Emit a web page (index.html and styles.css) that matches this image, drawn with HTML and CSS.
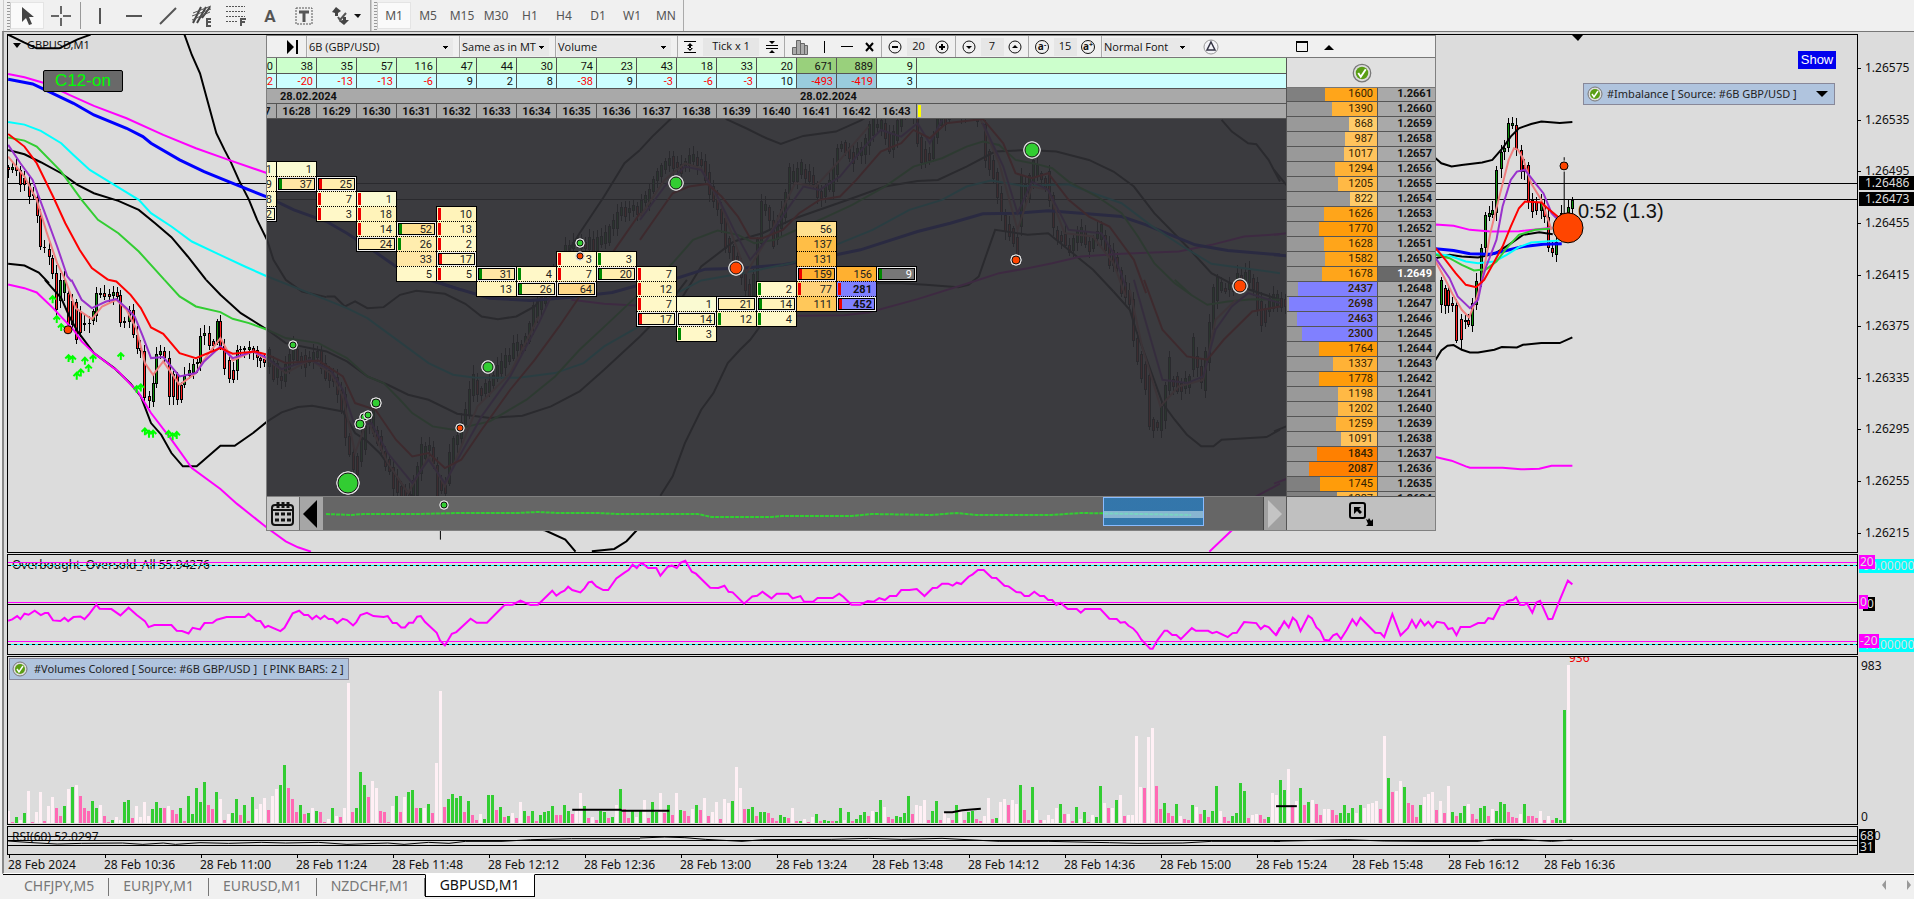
FILE: index.html
```html
<!DOCTYPE html>
<html lang="en">
<head>
<meta charset="utf-8">
<title>GBPUSD,M1</title>
<link rel="stylesheet" href="styles.css">
</head>
<body>
<div class="app">
  <header class="toolbar">
    <div class="tools">
      <span class="grip"></span>
      <button class="tool active" aria-label="Cursor"><svg width="20" height="20" viewBox="0 0 20 20"><path fill="#444" d="M5 1v15l4-4 3 7 3-1-3-7h5z"/></svg></button>
      <button class="tool" aria-label="Crosshair"><svg width="20" height="20" viewBox="0 0 20 20"><path stroke="#666" stroke-width="2" d="M0 10h8M12 10h8M10 0v8M10 12v8"/></svg></button>
      <span class="sep"></span>
      <button class="tool" aria-label="Vertical line"><svg width="20" height="20" viewBox="0 0 20 20"><path stroke="#555" stroke-width="2" d="M10 2v16"/></svg></button>
      <button class="tool" aria-label="Horizontal line"><svg width="20" height="20" viewBox="0 0 20 20"><path stroke="#555" stroke-width="2" d="M2 10h16"/></svg></button>
      <button class="tool" aria-label="Trendline"><svg width="20" height="20" viewBox="0 0 20 20"><path stroke="#555" stroke-width="2" d="M2 18L18 2"/></svg></button>
      <button class="tool" aria-label="Equidistant channel"><svg width="22" height="22" viewBox="0 0 22 22"><path fill="none" stroke="#444" stroke-width="2" d="M2 18L10 2M6 18L15 2M11 13L19 2"/><path stroke="#555" d="M1 11L20 4M1 15L19 7M2 8L20 1"/><path fill="none" stroke="#555" stroke-width="2" d="M20 14h-4v7h4M16 17h4"/></svg></button>
      <button class="tool" aria-label="Fibonacci"><svg width="22" height="22" viewBox="0 0 22 22"><path stroke="#555" stroke-width="1" stroke-dasharray="2 1" d="M1 1.500h19M1 6.500h19M1 11.500h19M1 16.500h12"/><path fill="none" stroke="#555" stroke-width="2" d="M16 21v-7h5M16 17h4"/></svg></button>
      <button class="tool" aria-label="Text"><b>A</b></button>
      <button class="tool" aria-label="Text label"><svg width="18" height="18" viewBox="0 0 18 18"><rect x="1" y="1" width="16" height="16" fill="none" stroke="#555" stroke-dasharray="2 1"/><path stroke="#555" stroke-width="3" d="M4 5h10M9 5v10"/></svg></button>
      <button class="tool wide" aria-label="Arrows"><svg width="30" height="20" viewBox="0 0 30 20"><path fill="#444" d="M1 6l4-5 5 4-3 2v3H4V7zM18 14l-5 5-5-4 4-1v-3h3v3z"/><path fill="none" stroke="#555" stroke-width="2" d="M7 11l2 3 6-7"/><path fill="#111" d="M23 8h7l-3 4z"/></svg></button>
    </div>
    <nav class="tools frames">
      <span class="grip"></span>
      <button class="tool active">M1</button><button class="tool">M5</button><button class="tool">M15</button><button class="tool">M30</button><button class="tool">H1</button><button class="tool">H4</button><button class="tool">D1</button><button class="tool">W1</button><button class="tool">MN</button>
    </nav>
  </header>

  <main class="workspace">
    <section class="pane price">
      <span class="caption symbol"><i class="down"></i>GBPUSD,M1</span>
      <svg class="plot" viewBox="0 0 1849 517" preserveAspectRatio="none">
        <path class="hair" d="M0 148.500H1849M0 164.500H1849"/>
        <g id="candles"></g>
        <g transform="translate(-8 -35) scale(.40816 .33333)">
          <polyline class="k" points="20,104 60,128 90,145 145,145 190,118 222,104"/>
          <polyline class="k" points="452,104 470,165 490,220 510,310 530,400 550,450 565,485 585,540 610,600 630,660 655,722 670,780 700,840 740,875 800,892"/>
          <polyline class="k" points="20,792 60,797 95,818 120,850"/>
          <polyline class="k" points="20,450 60,463 100,487 150,520 190,555 230,580 290,603 340,630 380,670 420,712 460,770 505,840"/>
          <polyline class="k" points="1340,870 1370,800 1420,700 1480,590 1530,490 1568,450"/>
          <polyline class="m" points="20,222 60,232 110,250 170,285 230,318 310,355 400,405 480,445 560,480 655,520 800,590"/>
          <polyline class="b" points="20,238 80,252 120,275 180,310 230,345 310,385 350,410 370,430 440,480 500,515 560,545 655,592 720,630 800,665 850,700 900,740 970,800 1050,840 1130,870"/>
          <polyline class="c" points="20,366 60,374 100,393 150,430 180,465 220,510 280,555 340,600 370,640 420,680 470,725 530,760 600,800 655,830"/>
          <polyline class="g" points="20,413 60,422 90,440 150,515 200,600 240,660 290,700 340,755 403,840"/>
          <polyline class="s" points="20,470 60,530 90,600 115,700 140,790 160,840"/>
          <polyline class="v" points="20,435 50,490 80,540 110,640 140,740 165,830 175,845"/>
          <polyline class="r" points="20,402 60,440 90,490 130,590 160,670 195,750 225,805 265,840"/>
          <polyline class="r" points="1420,890 1450,850 1500,760 1568,640"/>
        </g>
        <g transform="translate(632 -35) scale(.40816 .33333)">
          <polyline class="k" points="0,450 30,410 75,357 110,320"/>
          <polyline class="k" points="210,357 260,385 310,415 345,432 400,408 480,395 540,362 600,320"/>
          <polyline class="k" points="560,850 640,850 700,855 780,862 805,855 830,830 870,690 950,705 1000,700 1050,750 1110,810 1160,875"/>
          <polyline class="k" points="1425,360 1450,395 1490,430 1510,433 1540,480 1568,545"/>
          <polyline class="k" points="100,900 150,800 230,725 300,700 380,655 450,625 520,595 600,560 680,543 730,540 800,500 870,455 950,450 1020,455 1100,480 1160,515 1210,560 1260,640 1340,740 1400,820 1450,852 1568,900"/>
          <polyline class="m" points="385,948 500,946 560,938 680,898 800,852 880,820 950,805 1010,790 1080,770 1180,762 1320,755 1400,735 1480,710 1568,703"/>
          <polyline class="b" points="0,845 90,835 160,808 250,805 350,795 440,775 540,750 680,695 760,670 840,642 920,640 1000,633 1080,640 1180,650 1240,675 1300,705 1360,735 1440,752 1568,765"/>
          <polyline class="c" points="90,880 150,842 250,820 370,790 480,735 570,690 660,630 740,600 800,560 860,542 940,558 1050,553 1110,580 1180,610 1250,675 1330,740 1400,792 1480,805 1568,820"/>
          <polyline class="g" points="0,880 80,790 130,720 190,692 240,705 280,730 330,720 380,692 450,655 520,615 600,560 670,500 740,475 800,440 840,425 880,435 920,480 970,492 1010,505 1050,545 1120,590 1180,640 1220,710 1260,790 1310,850 1350,885"/>
          <polyline class="s" points="0,650 60,540 110,490 150,505 200,620 260,820 320,700 380,550 430,560 490,480 560,380"/>
          <polyline class="s" points="835,360 880,490 925,690 960,560 1000,570 1040,700 1110,710 1160,790 1190,890"/>
          <polyline class="v" points="0,660 60,560 110,500 150,510 190,590 230,690 270,780 310,720 360,630 400,560 440,570 490,530 550,440 590,390 640,410 680,370 710,430 740,360"/>
          <polyline class="v" points="840,370 890,500 925,640 960,545 1000,570 1050,690 1130,700 1160,760 1190,860"/>
          <polyline class="r" points="0,720 40,650 80,580 120,560 165,552 200,590 240,650 270,715 300,715 350,690 390,640 440,600 490,590 530,540 590,455 640,430 670,390 710,415 750,370 840,357 890,430 920,520 960,535 1000,520 1050,600 1100,650 1150,680 1210,780 1240,880"/>
        </g>
        <g transform="translate(1266 -35) scale(.40816 .33333)">
          <polyline class="k" points="0,510 30,555 200,600 300,560 396,475 410,490 435,500 460,495 510,488 535,480 560,445 580,410 600,385 630,372 655,365 700,369 731,366"/>
          <polyline class="k" points="396,775 430,765 460,770 500,773 540,762 575,735 610,705 650,697 683,703"/>
          <polyline class="m" points="0,705 30,700 396,674 440,678 480,690 530,695 600,694 680,684"/>
          <polyline class="b" points="0,765 30,768 396,747 440,752 480,762 530,763 570,752 610,740 660,733 705,732"/>
          <polyline class="c" points="396,762 430,768 470,785 500,790 540,785 570,765 600,742 630,728 700,722"/>
          <polyline class="g" points="396,765 430,775 460,795 490,812 520,808 545,785 570,745 600,705 640,690 680,686"/>
          <polyline class="s" points="396,785 420,840 437,882 460,930 478,953 495,900 510,840 530,700 550,600 575,480 588,445 598,450 610,475 630,550 655,600 680,690"/>
          <polyline class="v" points="396,775 430,835 450,890 480,925 500,900 510,840 520,800 545,720 560,620 580,540 595,515 615,510 640,550 660,580 680,640 700,665"/>
          <polyline class="r" points="396,745 420,780 445,820 470,855 495,862 515,840 540,785 560,740 580,680 600,625 615,605 655,608 675,630 700,655"/>
          <path class="w" d="M711 472v10M711 515v135"/>
        </g>
        <g transform="translate(-8 245) scale(.40816 .33333)">
          <polyline class="k" points="800,50 820,50 845,80 870,65 900,85 940,82 980,45 1020,33 1090,42 1140,72 1180,110 1220,118 1265,110 1310,80 1340,30"/>
          <polyline class="k" points="110,0 150,55 170,110 190,155 230,220 280,265 320,312 345,350 370,430 395,465 420,520 448,560 482,560 540,498 575,498 620,460 655,425 690,398 730,382 765,378 840,395 870,460 900,485 930,520 960,570 1000,640 1100,720 1335,752 1385,780 1410,816"/>
          <polyline class="k" points="1450,815 1505,808 1535,785 1560,752"/>
          <polyline class="k" points="505,0 540,45 590,100 655,150 700,190 800,215 850,245 900,290 950,315 1000,345 1050,360 1120,402 1200,415 1280,408 1350,380 1420,335 1480,270 1568,170"/>
          <polyline class="m" points="20,14 60,25 90,38 130,85 180,150 200,185 230,220 290,275 340,340 370,400 420,480 470,565 540,628 580,672 655,745 700,785 730,803 762,816"/>
          <polyline class="m" points="1400,60 1480,72 1568,78"/>
          <polyline class="b" points="1080,10 1130,30 1200,55 1300,62 1400,52 1500,38 1568,15"/>
          <polyline class="c" points="655,-10 800,60 850,85 900,115 950,160 1000,205 1050,250 1110,285 1160,293 1270,294 1360,280 1430,250 1480,200 1568,138"/>
          <polyline class="g" points="403,0 440,50 480,80 540,97 570,117 610,130 655,150 700,175 780,190 850,235 900,290 940,310 980,360 1010,400 1060,440 1110,450 1200,425 1290,360 1360,290 1420,210 1490,130 1568,40"/>
          <polyline class="s" points="160,0 185,85 225,118 250,80 285,60 310,90 335,150 355,250 375,285 400,245 440,315 480,280 500,240 540,175 570,242 620,215 655,240 700,280 760,240 810,280 840,350 870,520 900,420 950,550 1000,640 1050,530 1090,620 1130,500 1170,380 1250,280 1320,110"/>
          <polyline class="v" points="175,0 200,60 225,85 260,65 285,58 310,85 330,110 350,170 370,235 400,232 440,290 480,280 500,245 540,200 570,235 620,215 655,235 690,268 760,240 810,270 840,330 870,440 910,430 950,520 1010,610 1050,540 1090,610 1130,520 1180,410 1250,290 1320,130 1350,50"/>
          <polyline class="r" points="265,0 285,5 320,45 345,85 370,143 400,162 440,220 480,235 500,225 540,205 570,222 625,215 655,225 700,250 780,242 840,290 870,370 920,390 970,480 1010,530 1050,520 1090,565 1130,540 1180,450 1250,330 1310,240 1370,140 1420,50"/>
          <path class="w" d="M1079 700v80"/>
          <g id="arrows"></g>
        </g>
        <g transform="translate(632 245) scale(.40816 .33333)">
          <polyline class="k" points="50,648 80,590 110,490 150,390 180,340 215,250 245,210 270,180 300,130"/>
          <polyline class="k" points="0,170 40,120 115,0"/>
          <polyline class="k" points="1160,35 1200,90 1215,150 1280,370 1310,420 1340,465 1375,500 1405,500 1425,480 1535,472 1568,450"/>
          <polyline class="m" points="1395,816 1450,752 1510,650 1568,612"/>
          <polyline class="g" points="1310,0 1350,45 1390,75 1440,65 1500,58 1568,60"/>
          <polyline class="s" points="1200,30 1230,200 1275,380 1320,320 1380,300 1410,120 1460,60"/>
          <polyline class="v" points="1210,0 1240,130 1280,300 1340,310 1380,290 1410,150 1450,80 1490,40 1568,70"/>
          <polyline class="r" points="1235,0 1280,150 1340,230 1390,240 1430,180 1500,95 1568,80"/>
        </g>
        <g transform="translate(1266 245) scale(.40816 .33333)">
          <polyline class="k" points="0,455 30,440 200,380 396,240 410,212 425,198 440,196 460,210 480,218 500,218 540,210 558,202 595,203 610,195 655,190 700,190 731,173"/>
          <polyline class="m" points="0,612 30,598 396,532 435,543 470,560 480,564 560,564 605,569 650,567 680,558 731,558"/>
        </g>
        <g class="dot"><circle cx="60" cy="295" r="4"/><circle cx="1556" cy="131" r="4"/><circle cx="1560" cy="193" r="15"/></g>
        <path d="M1564 0h11l-5 6z"/>
      </svg>
      <button class="c12">C12-on</button>
      <span class="timer">0:52 (1.3)</span>
      <button class="show">Show</button>
      <button class="indicator imbalance"><svg width="16" height="16" viewBox="0 0 16 16"><use href="#tick"/></svg>#Imbalance [ Source: #6B GBP/USD ]<i class="down"></i></button>

      <div class="panel">
        <div class="ptools">
          <div class="grp first"><button aria-label="Go to end"><svg width="14" height="14" viewBox="0 0 14 14"><path d="M1 0l7 7-7 7zM10 0h2v14h-2z"/></svg></button></div>
          <div class="grp g2"><select aria-label="Instrument"><option>6B (GBP/USD)</option></select></div>
          <div class="grp g3"><select aria-label="Timeframe"><option>Same as in MT</option></select></div>
          <div class="grp g4"><select aria-label="Data"><option>Volume</option></select></div>
          <div class="grp g5">
            <button aria-label="Expand rows"><svg width="12" height="14" viewBox="0 0 12 14"><path stroke="#000" d="M0 1.500h12M0 12.500h12"/><path d="M3 6l3-3 3 3zM3 8l3 3 3-3zM5 5h2v4H5z"/></svg></button>
            <span class="field tick">Tick x 1</span>
            <button aria-label="Collapse rows"><svg width="12" height="14" viewBox="0 0 12 14"><path stroke="#000" d="M0 5.500h12M0 8.500h12"/><path d="M3 1l3 3 3-3zM3 13l3-3 3 3z"/></svg></button>
          </div>
          <div class="grp g6">
            <button aria-label="Histogram"><svg width="18" height="16" viewBox="0 0 18 16"><path fill="#aaa" stroke="#666" d="M1.500 8.500h4v7h-4zM5.500 1.500h4v14h-4zM9.500 4.500h4v11h-4zM13.500 6.500h3v9h-3z"/></svg></button>
            <button aria-label="Vertical line"><svg width="8" height="14" viewBox="0 0 8 14"><path d="M3 1h1v12H3z"/></svg></button>
            <button aria-label="Horizontal line"><svg width="12" height="14" viewBox="0 0 12 14"><path d="M0 6h12v1H0z"/></svg></button>
            <button aria-label="Delete"><svg width="10" height="12" viewBox="0 0 10 12"><path stroke="#000" stroke-width="2" d="M1 2l7 8M8 2l-7 8"/></svg></button>
          </div>
          <div class="grp g7"><button aria-label="Narrower"><svg width="14" height="14" viewBox="0 0 14 14"><circle class="ring" cx="7" cy="7" r="6"/><path d="M4 6h6v2H4z"/></svg></button><span class="field">20</span><button aria-label="Wider"><svg width="14" height="14" viewBox="0 0 14 14"><circle class="ring" cx="7" cy="7" r="6"/><path d="M4 6h6v2H4zM6 4h2v6H6z"/></svg></button></div>
          <div class="grp g8"><button aria-label="Lower"><svg width="14" height="14" viewBox="0 0 14 14"><circle class="ring" cx="7" cy="7" r="6"/><path d="M4 6h6l-3 3z"/></svg></button><span class="field">7</span><button aria-label="Higher"><svg width="14" height="14" viewBox="0 0 14 14"><circle class="ring" cx="7" cy="7" r="6"/><path d="M4 8h6l-3-3z"/></svg></button></div>
          <div class="grp g8"><button class="fs" aria-label="Smaller font">a<sup>-</sup></button><span class="field">15</span><button class="fs" aria-label="Larger font">a<sup>+</sup></button></div>
          <div class="grp g10"><select aria-label="Font"><option>Normal Font</option></select></div>
          <button class="delta" aria-label="Delta"><svg width="16" height="16" viewBox="0 0 16 16"><circle cx="8" cy="8" r="7" fill="#f4f4f8" stroke="#999"/><path fill="none" stroke="#334" stroke-width="1.500" d="M8 3l4 8H4z"/></svg></button>
          <div class="win"><button aria-label="Maximize"><svg width="12" height="12" viewBox="0 0 12 12"><path fill="none" stroke="#000" d="M.5 1.500h11v9H.5z"/><path d="M0 0h12v2H0z"/></svg></button><button aria-label="Collapse"><svg width="10" height="6" viewBox="0 0 10 6"><path d="M0 6l5-5 5 5z"/></svg></button></div>
        </div>
        <div class="pbody">
          <div class="map">
            <table class="totals"><tbody id="totals"></tbody></table>
            <div class="cluster" id="cluster"></div>
            <div class="scrub">
              <button class="cal" aria-label="Calendar"><svg width="26" height="26" viewBox="0 0 26 26"><rect x="2" y="4" width="21" height="20" rx="3" fill="none" stroke="#111" stroke-width="2"/><path stroke="#111" stroke-width="2" d="M2 9h21"/><path stroke="#111" stroke-width="3" d="M8 1v6M13 1v6M18 1v6"/><path stroke="#111" stroke-width="3" stroke-dasharray="4 2" d="M5 13h17M5 19h17"/></svg></button>
              <button class="prev" aria-label="Back"><svg width="14" height="28" viewBox="0 0 14 28"><path d="M14 0v28L0 14z"/></svg></button>
              <div class="track">
                <svg viewBox="0 0 941 32" preserveAspectRatio="none"><path class="trail" d="M3 17l25 1 12-1h55l40-1h60l20-1 20 1h40l20 1h80l14 3h60l10-1h70l20-2 60 1 25-2 20 2h75l30-2 60 1 50 1"/></svg>
                <button class="window" aria-label="Visible range"></button>
              </div>
              <button class="next" aria-label="Forward"><svg width="14" height="28" viewBox="0 0 14 28"><path fill="#c4c4c4" d="M0 0v28l14-14z"/></svg></button>
            </div>
          </div>
          <div class="dom">
            <div class="dhead"><svg width="20" height="20" viewBox="0 0 16 16"><use href="#tick"/></svg></div>
            <div class="dlist"><table><tbody id="ladder"></tbody></table></div>
            <div class="dfoot"><button aria-label="Resize"><svg width="24" height="24" viewBox="0 0 24 24"><rect x="1" y="1" width="15" height="15" rx="2" fill="none" stroke="#000" stroke-width="2"/><path d="M5 5h7l-2 2 3 3-2 2-3-3-3 3zM17 17l2 1 1-2 2 3 2-2v7h-7l2-2z"/></svg></button></div>
          </div>
        </div>
        <svg class="signals" width="1170" height="496" viewBox="266 35 1170 496">
          <g class="up"><circle cx="293" cy="345" r="3"/><circle cx="488" cy="367" r="5"/><circle cx="376" cy="403" r="4"/><circle cx="364" cy="417" r="3"/><circle cx="360" cy="424" r="4"/><circle cx="368" cy="415" r="3"/><circle cx="348" cy="483" r="10"/><circle cx="444" cy="505" r="3"/><circle cx="580" cy="243" r="3"/><circle cx="676" cy="183" r="6"/><circle cx="1032" cy="150" r="7"/></g>
          <g class="dn"><circle cx="460" cy="428" r="3"/><circle cx="580" cy="256" r="3"/><circle cx="736" cy="268" r="6"/><circle cx="1016" cy="260" r="4"/><circle cx="1240" cy="286" r="6"/></g>
        </svg>
      </div>
    </section>
    <aside class="axis prices">
      <span>1.26575</span><span>1.26535</span><span>1.26495</span><span>1.26455</span><span>1.26415</span><span>1.26375</span><span>1.26335</span><span>1.26295</span><span>1.26255</span><span>1.26215</span>
      <b class="tag ask">1.26486</b><b class="tag bid">1.26473</b>
    </aside>

    <section class="pane">
      <span class="caption">Overbought_Oversold_All 55.94276</span>
      <svg class="plot" viewBox="0 0 1849 99" preserveAspectRatio="none">
        <path class="cy" d="M0 10.500H1849M0 89.500H1849"/><path class="dash" d="M0 10.500H1849M0 89.500H1849"/>
        <path class="hair" d="M0 49.500H1849"/><path class="mg" d="M0 7.500H1849M0 47.500H1849M0 86.500H1849"/>
        <g transform="translate(-8 -15) scale(.40816 .33333)"><polyline class="m" points="20,242 30,238 42,228 50,237 60,221 70,224 85,212 100,225 110,219 118,219 130,241 148,243 158,233 167,243 180,231 197,229 207,237 217,224 236,194 244,206 273,207 295,226 315,203 335,225 355,243 364,261 378,255 420,255 433,272 446,273 462,280 472,263 490,268 501,249 521,248 531,239 555,231 600,231 609,221 628,242 638,243 649,262 657,257 687,273 697,263 717,220 733,212 745,225 755,225 765,237 775,227 785,237 795,227 805,237 815,237 826,249 840,236 850,240 865,256 873,246 883,225 899,218 915,228 940,231 950,228 962,249 972,249 983,262 992,262 1002,248 1012,248 1022,230 1031,228 1041,245 1070,278 1078,301 1090,316 1107,281 1118,276 1153,236 1168,248 1193,248 1236,195 1256,194 1275,182 1290,190 1300,195 1318,194 1353,152 1363,167 1373,158 1383,152 1392,140 1402,150 1422,157 1432,145 1442,127 1450,125 1461,139 1478,150 1490,150 1510,115 1530,98 1540,90 1550,74 1560,84 1568,72"/></g>
        <g transform="translate(632 -15) scale(.40816 .33333)"><polyline class="m" points="0,70 8,72 20,84 40,84 50,107 68,80 78,77 90,84 100,68 111,62 127,95 137,101 172,143 192,144 207,137 217,155 227,157 255,191 275,169 287,167 300,155 322,175 335,161 363,161 374,175 393,168 402,185 424,185 435,174 472,174 488,161 498,170 518,194 540,194 558,183 572,185 586,174 600,180 612,168 628,168 640,150 660,150 678,147 697,168 717,144 728,143 740,131 755,131 766,137 776,128 787,132 805,110 815,103 828,90 842,90 862,113 873,114 893,137 903,139 922,156 933,157 942,168 953,168 966,155 980,168 990,168 1000,180 1010,180 1020,195 1030,188 1048,207 1070,207 1080,218 1090,207 1128,207 1150,236 1168,237 1177,248 1188,246 1197,257 1208,265 1218,278 1228,298 1250,326 1256,326 1268,300 1285,272 1292,272 1304,285 1314,285 1325,297 1352,264 1362,272 1392,272 1402,279 1413,275 1440,291 1452,279 1462,278 1480,246 1510,249 1521,267 1530,257 1540,261 1558,285 1568,262"/></g>
        <g transform="translate(1266 -15) scale(.40816 .33333)"><polyline class="m" points="5,286 25,244 36,262 46,233 55,243 65,273 84,227 93,235 104,262 113,272 123,299 135,301 145,286 154,281 164,297 178,270 192,238 202,255 212,233 248,278 261,279 270,291 290,222 310,286 328,264 338,240 348,262 359,239 369,256 378,245 389,262 399,245 417,249 427,267 437,264 447,285 457,261 480,261 500,249 516,249 525,234 537,237 555,195 563,194 575,182 586,179 593,171 603,195 612,195 620,190 633,218 643,187 652,182 672,237 682,236 700,180 720,122 731,133"/></g>
      </svg>
    </section>
    <aside class="axis osc"><b class="tag cyan t1">90.00000</b><b class="tag pink t2">20</b><b class="tag t3">&nbsp;0</b><b class="tag pink t4">0</b><b class="tag cyan t5">10.00000</b><b class="tag pink t6">-20</b></aside>

    <section class="pane">
      <button class="indicator volumes"><svg width="16" height="16" viewBox="0 0 16 16"><g id="tick"><circle cx="8" cy="8" r="7" fill="#ddd" stroke="#777"/><circle cx="8" cy="8" r="5" fill="#5a9e14"/><path fill="none" stroke="#fff" stroke-width="1.500" d="M5 8l2 3 4-6"/></g></svg><span>#Volumes Colored [ Source: #6B GBP/USD ]</span><span>[ PINK BARS: 2 ]</span></button>
      <svg class="plot" viewBox="0 0 1849 167" preserveAspectRatio="none">
        <g id="bars"></g>
        <g transform="translate(-8 -117) scale(.40816 .33333)"><polyline class="k" points="1402,809 1520,809 1525,812 1640,812"/></g>
        <g transform="translate(632 -117) scale(.40816 .33333)"><polyline class="k" points="745,816 765,816 790,810 812,808 835,806"/></g>
        <g transform="translate(1266 -117) scale(.40816 .33333)"><path class="k" d="M5 798H56"/></g>
      </svg>
      <span class="peak">936</span>
    </section>
    <aside class="axis vol"><span>983</span><span>0</span></aside>

    <section class="pane">
      <span class="caption">RSI(60) 52.0297</span>
      <svg class="plot" viewBox="0 0 1849 27" preserveAspectRatio="none">
        <path class="hair" d="M0 9.500H1849M0 13.500H1849M0 18.500H1849"/>
        <g transform="translate(-8 -287) scale(.40816 .33333)"><polyline class="w" points="20,903 80,908 140,912 200,910 300,909 350,913 400,909 430,913 490,908 560,910 640,907 700,909 780,907 850,913 950,909 990,913 1050,907 1100,910 1140,904 1230,904 1300,899 1400,896 1568,896"/></g>
        <g transform="translate(632 -287) scale(.40816 .33333)"><polyline class="w" points="0,894 60,891 110,893 160,898 250,904 300,899 470,898 560,895 640,898 740,895 880,904 1000,904 1150,908 1220,910 1330,909 1400,904 1568,904"/></g>
        <g transform="translate(1266 -287) scale(.40816 .33333)"><polyline class="w" points="0,904 180,899 270,903 370,904 500,904 540,898 600,898 680,904 731,900"/></g>
      </svg>
    </section>
    <aside class="axis rsi"><span>100</span><b class="tag t7">68</b><b class="tag t8">31</b></aside>
  </main>

  <div class="times">
    <time>28 Feb 2024</time><time>28 Feb 10:36</time><time>28 Feb 11:00</time><time>28 Feb 11:24</time><time>28 Feb 11:48</time><time>28 Feb 12:12</time><time>28 Feb 12:36</time><time>28 Feb 13:00</time><time>28 Feb 13:24</time><time>28 Feb 13:48</time><time>28 Feb 14:12</time><time>28 Feb 14:36</time><time>28 Feb 15:00</time><time>28 Feb 15:24</time><time>28 Feb 15:48</time><time>28 Feb 16:12</time><time>28 Feb 16:36</time>
  </div>
  <footer class="tabs">
    <button>CHFJPY,M5</button><button>EURJPY,M1</button><button>EURUSD,M1</button><button>NZDCHF,M1</button><button class="on">GBPUSD,M1</button>
    <span class="scroll"><svg width="30" height="10" viewBox="0 0 30 10"><path fill="#999" d="M4 0v10L0 5zM25 0v10l4-5z"/></svg></span>
  </footer>
</div>
<script src="app.js"></script>
</body>
</html>
```

FILE: styles.css
```css
* { box-sizing: border-box; }
body { margin: 0; background: #f0f0f0; color: #111; font: 12px/16px "Noto Sans", sans-serif; }
button { margin: 0; padding: 0; border: 0; background: none; color: inherit; font: inherit; }
svg { display: block; }
table { border-collapse: separate; border-spacing: 0; table-layout: fixed; }
td { padding: 0; }

.app { display: flex; flex-direction: column; min-height: 100vh; }

.toolbar { display: flex; height: 31px; padding-left: 3px; }
.tools { display: flex; align-items: center; padding-left: 3px; border-right: 1px solid #aaa; border-left: 1px solid #ccc; }
.frames { padding-left: 2px; }
.frames .tool { font-size: 12px; color: #555; }
.grip { width: 3px; height: 28px; background: repeating-linear-gradient(#999 0 1px, #f0f0f0 1px 3px); }
.tool { display: flex; align-items: center; justify-content: center; width: 34px; height: 27px; color: #555; }
.tool.active { background: #fafafa; border: 1px solid #e4e4e4; border-left-color: #ccc; }
.tool b { font: bold 17px/20px Roboto, sans-serif; }
.tool.wide { width: 49px; }
.sep { width: 1px; height: 27px; margin: 0 2px; background: #999; }

.workspace {
  flex: 1; display: grid; grid-template-columns: minmax(0, 1fr) 56px;
  grid-template-rows: minmax(0, 518fr) minmax(0, 101fr) minmax(0, 169fr) minmax(0, 29fr);
  row-gap: 1px; margin-left: 2px; padding: 2px 0 0 3px; background: #dcdcdc;
  border-top: 1px solid #777; border-left: 2px solid #888;
}
.pane { position: relative; border: 1px solid #000; overflow: hidden; }
.plot { position: absolute; inset: 0; width: 100%; height: 100%; }
.caption { position: absolute; left: 4px; top: 2px; white-space: nowrap; }
.symbol { left: 5px; display: flex; align-items: center; gap: 6px; font-size: 11px; }
.down { border: 4px solid transparent; border-top: 5px solid #000; border-bottom: 0; }

.plot polyline, .plot path { vector-effect: non-scaling-stroke; }
.plot polyline { fill: none; stroke-width: 2; }
.k { stroke: #000; stroke-width: 2; fill: none; }
.m { stroke: #f0f; }
.b { stroke: #00f; }
.plot .b { stroke-width: 3; }
.c { stroke: #0ff; }
.g { stroke: #32cd32; }
.r { stroke: #f00; }
.v { stroke: #9932cc; }
.s { stroke: #f08080; }
.w { stroke: #000; fill: none; }
.plot .w { stroke-width: 1; }
.hair { stroke: #000; }
.mg { stroke: #f0f; }
.cy { stroke: #0ff; }
.dash { stroke: #000; stroke-dasharray: 3 3; }
.hair, .mg, .cy, .dash, #candles rect, #bars rect { shape-rendering: crispEdges; }
.dot circle { fill: #ff4500; stroke: #000; }
.plot .arrow { stroke: #0f0; fill: none; }

.c12 { position: absolute; left: 35px; top: 35px; width: 80px; height: 22px; border: 1px solid #000; border-radius: 2px; background: #696969; color: #0f0; font: 17px/20px "Liberation Sans", sans-serif; }
.timer { position: absolute; left: 1570px; top: 164px; font: 20px/24px "Liberation Sans", sans-serif; }
.show { position: absolute; right: 21px; top: 16px; width: 38px; height: 18px; background: #0000ee; color: #fff; font: 13px/18px "Liberation Sans", sans-serif; }
.indicator { position: absolute; display: flex; align-items: center; gap: 4px; height: 22px; padding: 0 3px; background: #b0c4de; border: 1px solid #889; font-size: 11px; color: #222; white-space: nowrap; }
.imbalance { right: 22px; top: 48px; width: 252px; }
.imbalance .down { margin-left: auto; margin-right: 3px; border-width: 6px; border-top-width: 6px; border-bottom: 0; }
.volumes { left: 1px; top: 1px; z-index: 1; gap: 6px; padding: 0 4px 0 2px; }
.peak { position: absolute; left: 1561px; top: -7px; color: #e00; }

.panel { position: absolute; left: 258px; right: 421px; top: 0; height: 496px; display: flex; flex-direction: column; border: 1px solid #808080; }
.ptools { display: flex; height: 22px; background: #f0f0f0; border-bottom: 1px solid #777; font: 11px/16px "Open Sans", sans-serif; }
.grp { display: flex; align-items: center; justify-content: space-between; padding: 0 6px; border-left: 1px solid #aaa; }
.grp.first { width: 39px; border: 0; justify-content: flex-end; }
.g2 { width: 153px; } .g3 { width: 96px; } .g4 { width: 122px; }
.g5 { width: 107px; } .g6 { width: 97px; } .g7 { width: 74px; } .g8 { width: 73px; } .g10 { width: 95px; }
.grp:has(select) { padding: 0 6px 0 1px; }
select {
  appearance: none; width: 100%; height: 18px; padding: 0 12px 0 1px; border: 0; font: inherit; color: inherit;
  background: linear-gradient(#000, #000) right 5px top 8px / 5px 1px no-repeat, linear-gradient(#000, #000) right 6px top 9px / 3px 1px no-repeat, linear-gradient(#000, #000) right 7px top 10px / 1px 1px no-repeat, #e8e8e8;
}
.field { width: 23px; height: 18px; background: #e6e6e6; text-align: center; }
.tick { width: 56px; }
.ring { fill: none; stroke: #111; }
.fs { width: 14px; height: 14px; border: 1px solid #111; border-radius: 50%; font: bold 10px/11px "Open Sans", sans-serif; }
.fs sup { font-size: 7px; line-height: 0; vertical-align: 3px; }
.delta { width: 30px; display: flex; align-items: center; justify-content: center; }
.win { display: flex; align-items: center; gap: 16px; width: 149px; margin-left: auto; padding-left: 10px; }

.pbody { flex: 1; min-height: 0; display: flex; }
.map { flex: 1; min-width: 0; display: flex; flex-direction: column; overflow: hidden; font: 11px/13px Roboto, sans-serif; }
.totals { width: calc(100% + 30px); margin-left: -30px; }
.totals td { width: 40px; height: 15px; padding: 1px 3px 0 0; border-right: 1px solid #555; border-bottom: 1px solid #555; text-align: right; white-space: nowrap; }
.totals td:last-child { width: auto; border-right: 0; }
.totals .sum td { background: #ccffcc; height: 16px; }
.totals .diff td { background: #ccffff; }
.totals .sum .hot { background: #99d07c; }
.totals .diff .hot { background: #99ccdd; }
.totals .neg { color: #f00; }
.totals .day td, .totals .hour td { background: #a9a9a9; font-weight: 700; }
.totals .day td { border-right: 0; padding-left: 3px; text-align: left; overflow: visible; }
.totals .hour td { padding-right: 0; text-align: center; }
.totals .hour td:last-child { background: linear-gradient(#ff0, #ff0) 1px 1px / 3px 12px no-repeat #a9a9a9; }
.cluster {
  flex: 1; min-height: 0; display: grid; grid-template-columns: repeat(17, 40px); grid-auto-rows: 15px;
  padding: 42px 0 0; background: rgba(45, 45, 50, .925); overflow: hidden;
}
.stack { border: 1px solid #000; margin: 0 -1px -1px 0; position: relative; left: -31px; }
.lot { position: relative; height: 15px; padding-right: 4px; border-top: 1px dotted #000; text-align: right; line-height: 15px; color: #222; }
.lot:first-child { height: 14px; border-top: 0; }
.lot.box { box-shadow: inset 0 0 0 1px #eee, inset 0 0 0 2px #000; }
.lot.up::before, .lot.dn::before { content: ""; position: absolute; left: 1px; top: 1px; bottom: 1px; width: 3px; background: #080; }
.lot.dn::before { background: #e00; }
.lot.box::before { left: 2px; top: 2px; bottom: 2px; }
.lot.big { font-weight: 700; color: #111; }

.scrub { display: flex; height: 34px; background: #666; border-top: 1px solid #808080; }
.scrub button { display: flex; align-items: center; justify-content: center; }
.scrub .cal { width: 33px; background: #c8c8c8; border-right: 1px solid #666; }
.scrub .prev { width: 23px; background: #a6a6a6; }
.scrub .prev svg { margin-right: 3px; }
.scrub .next { width: 23px; background: #a0a0a0; border-left: 1px solid #444; }
.track { flex: 1; position: relative; }
.track svg { width: 100%; height: 32px; }
.trail { fill: none; stroke: #32cd32; stroke-width: 2; stroke-dasharray: 4 1; }
.track .window { position: absolute; left: 83%; top: 0; width: 101px; height: 29px; border: 1px solid #8abcff; background: linear-gradient(rgba(30, 125, 200, .7) 13px, rgba(150, 215, 255, .7) 13px 20px, rgba(30, 125, 200, .7) 20px); }

.dom { width: 149px; display: flex; flex-direction: column; border-left: 1px solid #555; background: #c0c0c0; font: 11px/14px Roboto, sans-serif; }
.dhead { height: 30px; display: flex; align-items: center; justify-content: center; padding-left: 2px; background: #e0e0e0; border-bottom: 1px solid #777; }
.dlist { flex: 1; min-height: 0; overflow: hidden; display: flex; flex-direction: column; }
.dlist table { width: 100%; margin-top: -1px; }
.dlist td { height: 15px; border-bottom: 1px solid #555; text-align: right; padding-right: 4px; }
.dlist .qty { width: 91px; background: #999; border-right: 1px solid #555; color: #332200; }
.dlist .lvl { background: #a9a9a9; font-weight: 700; padding-right: 3px; }
.dlist .dark { background: #808080; }
.dlist .now { background: #696969; color: #fff; }
.dlist .qty.strong { font-weight: 500; }
.dfoot { height: 34px; display: flex; align-items: center; justify-content: center; border-top: 1px solid #555; background: #c0c0c0; }
.signals { position: absolute; left: -1px; top: -1px; pointer-events: none; }
.signals circle { stroke: #111; filter: drop-shadow(1px 0 0 #ddd) drop-shadow(-1px 0 0 #ddd) drop-shadow(0 1px 0 #ddd) drop-shadow(0 -1px 0 #ddd); }
.up { fill: #32cd32; }
.dn { fill: #ff4500; }

.axis { position: relative; overflow: hidden; }
.prices { display: flex; flex-direction: column; justify-content: space-between; padding: 26px 0 12px; }
.prices span { padding-left: 7px; position: relative; }
.prices span::before { content: ""; position: absolute; left: 0; top: 8px; width: 3px; height: 1px; background: #000; }
.tag { position: absolute; left: 1px; height: 14px; padding: 0 1px; background: #000; color: #ddd; font: 12px/14px "Noto Sans", sans-serif; }
.ask, .bid { width: 55px; padding-left: 6px; }
.ask { top: 142px; } .bid { top: 158px; }
.cyan { background: #0ff; width: 60px; padding-left: 4px; }
.pink { background: #f0f; }
.t1 { top: 5px; } .t2 { top: 1px; } .t3 { top: 43px; left: 5px; } .t4 { top: 41px; } .t5 { top: 84px; } .t6 { top: 80px; }
.t7 { top: 3px; } .t8 { top: 15px; height: 12px; line-height: 11px; }
.vol { display: flex; flex-direction: column; justify-content: space-between; padding: 2px 0 0 3px; }
.rsi { padding: 2px 0 0 2px; }

.times { display: grid; grid-auto-flow: column; grid-auto-columns: 96px; justify-content: start; height: 19px; margin-left: 2px; padding-left: 5px; background: #dcdcdc; border-left: 2px solid #888; border-bottom: 1px solid #fff; }
.times time { position: relative; line-height: 19px; margin-left: -1px; white-space: nowrap; }
.times time::before { content: ""; position: absolute; left: 1px; top: 0; width: 1px; height: 3px; background: #000; }

.tabs { display: flex; height: 25px; margin-left: 3px; padding-left: 7px; border-top: 1px solid #000; font-size: 14px; line-height: 20px; color: #777; }
.tabs button { position: relative; height: 23px; padding: 0 15px 2px 14px; }
.tabs button:not(.on)::after { content: ""; position: absolute; right: 0; top: 3px; width: 1px; height: 18px; background: #777; }
.tabs .on { margin: -1px 0 0; background: #fff; color: #111; border: 1px solid #000; border-top-color: #fff; }
.scroll { margin-left: auto; padding: 5px 2px 0 0; }
```

FILE: app.js
```js
const SVG = 'http://www.w3.org/2000/svg';
const byId = id => document.getElementById(id);

function rect(parent, x, y, w, h, fill) {
  const el = document.createElementNS(SVG, 'rect');
  Object.entries({ x, y, width: w, height: h, fill }).forEach(([k, v]) => el.setAttribute(k, v));
  parent.appendChild(el);
}

/* Volume bars: colour letter followed by height, one entry per minute. */
const volume = [
  'w12p1g6w3g10w32p1w11w31p2w17w26p15p7g17w34g36w38p27p15p12g22g15w18p7p1g3w6w3g21g23p5w17w6w21w7g14g21g15p15w17p13p9g15p2g27g9g35g21g41p18p14g31w24p3w9g10g24p8g18p2g26w14w19w25p13w27w34g38g58p35p24p11g18p9g10w15g12p11p1w4g15w7p6w15w140p11g15g51g38p26w42w35p12p11p1w17g27p11w26g31g33p15g15w15g19p10w60w132p16g24g29g25g27p11g22p8p3w9g4g28g28p13g16p6g7w10p5w21g12p7g12p2g8g11g12g17p8p8g18g12p9w12w30g17p5w6p3g12g11p5g6w18g34p14p5g12w6',
  'g13w23p5g21g11w30p10g18p8w30g13p12p7w14g18p13w25p7w11w21p4w24w20g22w56w35p14g14g16p7g11g11p10p5p2g8g6p5w15p2g2w4p1w6g9p2g3g2p2g2g15w3g11p2g4g8g11p7w12g11g23w16p6p4g7g6g10g27p9w18w17w23p3g12g22p3w10w5p3g18w12p3g11g12p4p2w7w25p4g5w21w24p18w23w19g38p13p3g36w13p3w3w8w4w15g19p9w9p2g16w4g11p1w8g6g37w20p15w15g23w28p7w8w8w87w36p35w86w95p37p14g20p10p7g19w7p4p3g18w16p9g13p6g12g37w12p6p2g7g10g40g32p5w8w9p8p4g6w30w28',
  'g43g33w54p18w22g35p18g21w23p19p8w14w14p13p8g10g18g10g15w10g18w15w19w20w22p14w87g45p31w32w42g36p20p18p6g18w26w29w31p13w22p10w37g11p7g10g17w19p9p4g15g17p7w14g12g21g19p11p6p5w9g19p7p7p5w12p3w7p3g5g3g113w158'
].join('');
const barColour = { w: '#fff0f5', g: '#32cd32', p: '#ff69b4' };
volume.match(/[wgp]\d+/g).forEach((bar, i) => {
  const h = +bar.slice(1);
  rect(byId('bars'), 4 * i - 1, 166 - h, 3, h, barColour[bar[0]]);
});

/* Candles */
let seed = 7;
const rnd = () => (seed = (seed * 16807) % 2147483647) / 2147483647;
let lastMid = 0;
function candle(x, top, bottom) {
  const mid = (top + bottom) / 2;
  const h = Math.max(1, bottom - top);
  const g = byId('candles');
  const up = 2 + rnd() * 7, down = 2 + rnd() * 7;
  rect(g, x, top - up, 1, h + up + down, '#000');
  rect(g, x - 1, top, 3, h, '#000');
  if (h > 2) rect(g, x, top + 1, 1, h - 2, mid > lastMid ? '#ff2020' : '#0a900a');
  lastMid = mid;
}
const toX = (x, ox) => Math.round(x / 2.45 + ox);
const toY = (y, oy) => y / 3 + oy;
function solid(ox, oy, data) {
  data.split(' ').forEach(s => {
    const [x, a, b] = s.split(',').map(Number);
    candle(toX(x, ox), toY(a, oy), toY(b, oy));
  });
}
solid(-8, -35, '20,500,510 30,500,510 40,500,512 50,510,556 60,535,556 70,552,592 80,583,587 90,590,648 99,648,742 109,742,745 119,748,772 128,775,822 138,820,930');
solid(-8, 245, '148,0,65 158,0,40 167,40,135 177,65,135 187,68,180 197,95,160 207,130,135 217,130,134 227,95,125 236,40,110 246,40,45 256,40,52 266,42,52 276,38,50 286,38,52 295,45,130 305,125,130 315,92,128 325,92,165 335,165,208 344,205,215 354,215,355 364,350,365 374,310,368 383,222,312 393,215,225 403,215,235 413,235,352 423,283,352 433,283,362 443,315,362 452,290,315 462,270,290 472,252,280 482,248,254 491,168,250 501,160,170 511,160,200 521,185,200 531,125,190 540,125,200 550,200,268 560,240,298 570,272,300 580,210,275 589,208,212 599,206,210 609,203,212 619,205,215 629,210,235 638,235,245 648,238,250');
const path = [];
function walk(ox, oy, data) {
  data.split(' ').forEach(s => { const [x, y] = s.split(',').map(Number); path.push([x / 2.45 + ox, toY(y, oy)]); });
}
walk(-8, 245, '658,240 668,270 688,290 707,250 717,220 740,240 775,225 785,235 800,285 815,300 830,340 843,390 853,500 870,580 883,520 900,435 912,425 922,475 935,500 950,560 965,610 1000,660 1020,600 1035,515 1050,500 1060,525 1070,600 1090,630 1100,560 1115,490 1128,460 1140,410 1150,350 1160,310 1180,340 1197,320 1215,275 1235,240 1255,222 1275,197 1290,180 1305,115 1320,70');
walk(-8, -35, '1340,880 1355,830 1395,745 1410,720 1450,740 1490,700 1520,640 1568,620');
walk(632, -35, '20,590 40,530 75,480 100,500 115,475 140,480 155,500 180,590 200,650 210,720 230,770 250,830 270,890 285,800 300,620 315,640 330,720 350,640 365,530 395,510 420,540 445,590 470,540 490,440 520,470 545,450 570,370 590,370 610,440 640,350 670,330 690,470 710,480 730,370 760,340 800,330 835,350 850,470 870,540 890,660 910,700 925,760 935,560 950,570 965,500 985,530 1000,560 1020,700 1050,740 1080,700 1100,740 1130,690 1150,770 1170,800 1180,860 1200,890 1215,1040 1230,1110 1245,1180 1250,1270 1270,1280 1285,1220 1295,1130 1320,1160 1345,1140 1355,1060 1380,1140 1390,1050 1405,900 1415,860 1440,870 1490,820 1510,880 1525,960 1550,900 1568,910');
let seg = 0;
for (let x = path[0][0]; x < 1278; x += 4) {
  while (seg < path.length - 2 && path[seg + 1][0] < x) seg++;
  const [x0, y0] = path[seg], [x1, y1] = path[seg + 1];
  const slope = (y1 - y0) / (x1 - x0 || 1);
  const y = y0 + slope * (x - x0) + (rnd() - 0.5) * 6;
  const half = Math.min(26, Math.abs(slope) * 2 + 1 + rnd() * 5);
  candle(Math.round(x), y - half, y + half);
}
solid(1266, -35, '408,840,915 418,865,918 427,870,920 437,910,920 447,915,1025 457,958,1022 467,962,966 476,960,975 486,910,980 496,845,915 506,745,850 516,645,745 526,640,650 535,630,645 545,510,640 555,455,508 564,445,455 574,370,445 584,368,378 594,375,450 604,450,515 613,495,515 623,495,605 633,600,635 643,605,632 653,605,632 662,620,650 672,650,745 682,745,758 692,725,765 702,640,650 721,620,640 731,600,628');

/* Signal arrows */
[[129,58],[139,118],[150,142],[168,235],[178,238],[208,243],[228,236],[217,265],[188,288],[198,278],[296,229],[335,328],[345,323],[355,455],[365,462],[375,462],[413,463],[423,470],[433,466]].forEach(([x, y]) => {
  const p = document.createElementNS(SVG, 'path');
  p.setAttribute('class', 'k arrow');
  p.setAttribute('d', `M${x} ${y + 12}V${y - 8}M${x - 8} ${y + 1}L${x} ${y - 9}L${x + 8} ${y + 1}`);
  byId('arrows').appendChild(p);
});

/* Totals table */
const rows = {
  sum: [70, 38, 35, 57, 116, 47, 44, 30, 74, 23, 43, 18, 33, 20, 671, 889, 9],
  diff: [-2, -20, -13, -13, -6, 9, 2, 8, -38, 9, -3, -6, -3, 10, -493, -419, 3],
  day: Array.from({ length: 17 }, (_, i) => (i === 1 || i === 14 ? '28.02.2024' : '')),
  hour: Array.from({ length: 17 }, (_, i) => `16:${27 + i}`)
};
byId('totals').innerHTML = Object.entries(rows).map(([name, vals]) =>
  `<tr class="${name}">${vals.map((v, i) => `<td class="${i === 14 || i === 15 ? 'hot' : ''} ${v < 0 ? 'neg' : ''}">${v}</td>`).join('')}<td></td></tr>`).join('');

/* Cluster cells: value, u/d = delta marker, b = maximum of the bar */
const stacks = [
  [0, '1 9 8 2b'], [0, '1 37ub'], [1, '25db 7d 3d'], [2, '1d 18d 14d 24b'], [4, '52ub 26u 33 5'],
  [3, '10d 13d 2d 17db 5d'], [7, '31ub 13'], [7, '4u 26ub'], [6, '3d 7d 64b'], [6, '3u 20ub'],
  [7, '7d 12d 7d 17db'], [9, '1 14b 3u'], [9, '21b 12u'], [8, '2u 14ub 4u'],
  [4, '56 137 131 159db 77d 111'], [7, '156 281d 452db'], [7, '9ub']
];
const heat = [[281, '#8080ff'], [150, '#ffb030'], [130, '#ffbe46'], [100, '#ffc85a'], [70, '#ffd27a'], [60, '#ffd888'], [50, '#ffe090'], [30, '#ffe6a4'], [20, '#ffedae'], [10, '#fff3ba'], [2, '#fff8c8'], [0, '#fafad2']];
byId('cluster').innerHTML = stacks.map(([row, cells], i) => {
  const list = cells.split(' ');
  return `<div class="stack" style="grid-column:${i + 1};grid-row:${row + 1}/span ${list.length}">` + list.map(c => {
    const v = parseInt(c, 10);
    const bg = i === 16 ? '#777;color:#fff' : heat.find(h => v >= h[0])[1];
    return `<div class="lot ${c.includes('u') ? 'up' : ''} ${c.includes('d') ? 'dn' : ''} ${c.includes('b') ? 'box' : ''} ${v > 200 ? 'big' : ''}" style="background:${bg}">${v}</div>`;
  }).join('') + '</div>';
}).join('');

/* Price ladder */
const qty = [1600, 1390, 868, 987, 1017, 1294, 1205, 822, 1626, 1770, 1628, 1582, 1678, 2437, 2698, 2463, 2300, 1764, 1337, 1778, 1198, 1202, 1259, 1091, 1843, 2087, 1745, 1227];
const shade = [[2300, '#8080ff'], [1800, '#ff8000'], [1700, '#ff9c0a'], [1500, '#ffa51a'], [1250, '#ffb236'], [1100, '#ffb945'], [900, '#ffc35c'], [0, '#ffcc6a']];
byId('ladder').innerHTML = qty.map((q, i) => {
  const w = Math.round(q * 0.0326);
  const c = shade.find(s => q >= s[0])[1];
  return `<tr><td class="qty ${i === 0 || i > 25 ? 'dark' : ''} ${q > 1800 ? 'strong' : ''}" style="background-image:linear-gradient(${c},${c});background-size:${w}px 100%;background-position:right;background-repeat:no-repeat">${q}</td><td class="lvl ${i === 12 ? 'now' : ''}">${(1.2661 - i / 10000).toFixed(4)}</td></tr>`;
}).join('');
```
